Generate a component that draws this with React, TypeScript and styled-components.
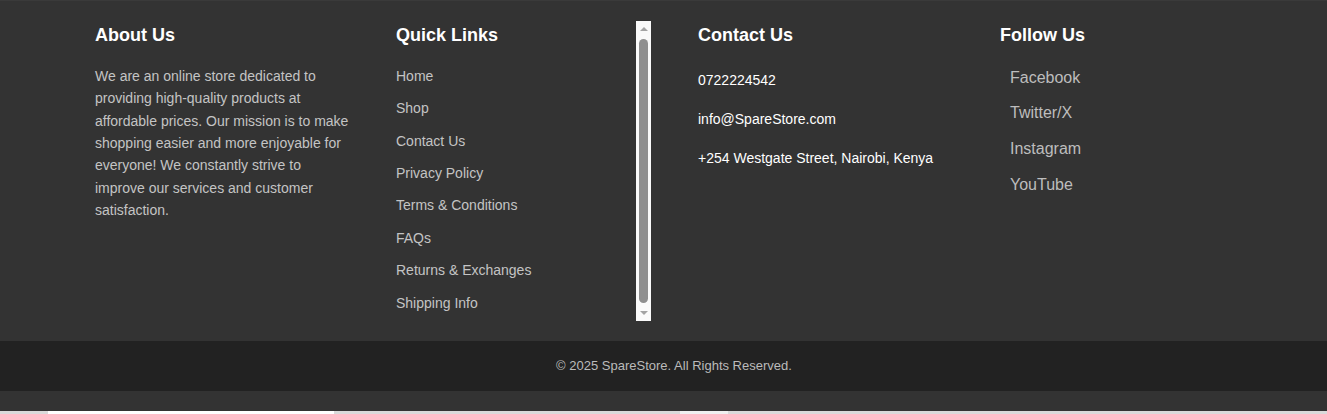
import React from "react";
import styled, { createGlobalStyle } from "styled-components";

const Global = createGlobalStyle`
  html, body { margin: 0; padding: 0; background: #333; }
  body { font-family: "Liberation Sans", Arial, sans-serif; line-height: 1.6; }
  * { box-sizing: border-box; }
`;

const Footer = styled.footer`
  background: #333;
  color: #ccc;
  padding: 20px 0;
  border-top: 1px solid #3a3a3a;
`;

const Columns = styled.div`
  display: grid;
  grid-template-columns: 254px 255px 255px 255px;
  column-gap: 47px;
  padding-left: 95px;
  align-items: start;
`;

const Column = styled.div`
  height: 300px;
`;

const ScrollColumn = styled.div`
  height: 300px;
  display: flex;
  overflow: hidden;
`;

const ScrollContent = styled.div`
  flex: 1;
  min-width: 0;
  overflow: hidden;
`;

const ScrollTrack = styled.div`
  width: 15px;
  flex: none;
  height: 100%;
  background: #fafafa;
  display: flex;
  flex-direction: column;
  align-items: center;
  padding: 6px 0;
`;

const Arrow = styled.div<{ $down?: boolean }>`
  width: 0;
  height: 0;
  border-left: 4.5px solid transparent;
  border-right: 4.5px solid transparent;
  ${(p) =>
    p.$down
      ? "border-top: 4px solid #a3a3a3;"
      : "border-bottom: 4px solid #a3a3a3;"}
  flex: none;
`;

const Thumb = styled.div`
  width: 9px;
  flex: 1;
  margin: 8px 0;
  border-radius: 5px;
  background: #8f8f8f;
`;

const Heading = styled.h3<{ $mb?: number }>`
  margin: 0 0 ${(p) => p.$mb ?? 15}px;
  font-size: 18px;
  font-weight: bold;
  color: #fff;
`;

const About = styled.p`
  margin: 0;
  font-size: 14px;
  line-height: 22.4px;
  color: #c4c4c4;
`;

const LinkList = styled.ul`
  list-style: none;
  margin: 0;
  padding: 0;
`;

const LinkItem = styled.li`
  margin-bottom: 10px;
  font-size: 14px;
  line-height: 22.4px;
  color: #c4c4c4;
`;

const ContactLine = styled.p`
  margin: 0 0 16.6px;
  font-size: 14px;
  line-height: 22.4px;
  color: #fff;
`;

const Social = styled.a`
  display: block;
  padding: 5px 10px;
  font-size: 16px;
  line-height: 25.6px;
  color: #bdbdbd;
  text-decoration: none;
`;

const BottomBar = styled.div`
  margin-top: 20px;
  height: 50px;
  background: #222;
  display: flex;
  align-items: center;
  justify-content: center;
  padding-left: 21px;
  font-size: 13px;
  color: #bbb;
`;

const Strip = styled.div`
  display: flex;
  height: 3px;
  background: #dadada;
`;

const StripSeg = styled.div<{ $w: number; $c: string }>`
  width: ${(p) => p.$w}px;
  background: ${(p) => p.$c};
  flex: none;
`;

const quickLinks = [
  "Home",
  "Shop",
  "Contact Us",
  "Privacy Policy",
  "Terms & Conditions",
  "FAQs",
  "Returns & Exchanges",
  "Shipping Info",
];

const socials = ["Facebook", "Twitter/X", "Instagram", "YouTube"];

export default function App() {
  return (
    <>
      <Global />
      <Footer>
        <Columns>
          <Column>
            <Heading>About Us</Heading>
            <About>
              We are an online store dedicated to providing high-quality products at affordable
              prices. Our mission is to make shopping easier and more enjoyable for everyone! We
              constantly strive to improve our services and customer satisfaction.
            </About>
          </Column>
          <ScrollColumn>
            <ScrollContent>
              <Heading>Quick Links</Heading>
              <LinkList>
                {quickLinks.map((l) => (
                  <LinkItem key={l}>{l}</LinkItem>
                ))}
              </LinkList>
            </ScrollContent>
            <ScrollTrack>
              <Arrow />
              <Thumb />
              <Arrow $down />
            </ScrollTrack>
          </ScrollColumn>
          <Column>
            <Heading $mb={19}>Contact Us</Heading>
            <ContactLine>0722224542</ContactLine>
            <ContactLine>info@SpareStore.com</ContactLine>
            <ContactLine>+254 Westgate Street, Nairobi, Kenya</ContactLine>
          </Column>
          <Column>
            <Heading $mb={10}>Follow Us</Heading>
            {socials.map((s) => (
              <Social key={s} href="#">
                {s}
              </Social>
            ))}
          </Column>
        </Columns>
        <BottomBar>© 2025 SpareStore. All Rights Reserved.</BottomBar>
      </Footer>
      <Strip>
        <StripSeg $w={48} $c="#dadada" />
        <StripSeg $w={286} $c="#ffffff" />
        <StripSeg $w={346} $c="#dadada" />
        <StripSeg $w={48} $c="#f0f0f0" />
      </Strip>
    </>
  );
}
